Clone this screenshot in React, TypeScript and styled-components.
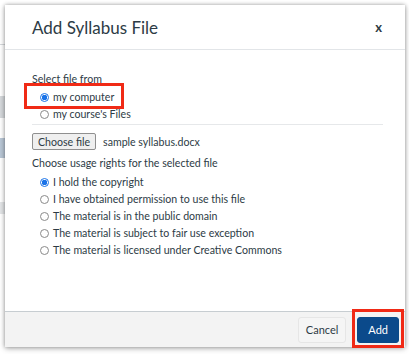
import React from 'react';
import styled, { createGlobalStyle } from 'styled-components';

const GlobalStyle = createGlobalStyle`
  html, body {
    margin: 0;
    padding: 0;
    background: #ffffff;
  }
  body {
    font-family: Lato, "Open Sans", "Liberation Sans", sans-serif;
    color: #2d3b45;
  }
`

const Page = styled.div`
  position: relative;
  width: 409px;
  height: 354px;
  padding: 5px 4px 7px 5px;
  box-sizing: border-box;
  overflow: hidden;
  background: #fff;
`

const Backdrop = styled.div`
  position: absolute;
  left: 0;
  width: 6px;
  background: ${p => p.color};
`

const Dialog = styled.div`
  position: relative;
  width: 400px;
  height: 342px;
  display: flex;
  flex-direction: column;
  background: #fff;
  box-shadow: 0 0 4px rgba(0, 0, 0, 0.35), 0 2px 6px rgba(0, 0, 0, 0.2);
`

const Header = styled.div`
  height: 44px;
  display: flex;
  align-items: center;
  justify-content: space-between;
  padding: 0 23px 0 27px;
  border-bottom: 1px solid #e2e5e8;
  flex-shrink: 0;
`

const Title = styled.h1`
  margin: 0;
  font-size: 17px;
  font-weight: 400;
  color: #2d3b45;
`

const Close = styled.span`
  font-size: 13px;
  font-weight: 700;
  color: #2d3b45;
  line-height: 1;
`

const Body = styled.div`
  flex: 1;
  padding: 22px 22px 0 27px;
  font-size: 10.6px;
`

const Label = styled.div`
  line-height: 14px;
  margin-bottom: ${p => p.$gap || 0}px;
`

const RadioList = styled.div`
  display: flex;
  flex-direction: column;
  padding-left: ${p => p.$indent || 0}px;
  gap: ${p => p.$gap || 0}px;
`

const RadioRow = styled.label`
  position: relative;
  display: flex;
  align-items: center;
  gap: 4px;
  height: 14px;
  line-height: 14px;
  width: max-content;
`

const Dot = styled.span`
  width: 9px;
  height: 9px;
  box-sizing: border-box;
  border-radius: 50%;
  border: 1px solid ${p => (p.$on ? '#1a73e8' : '#8a8a8a')};
  background: ${p => (p.$on ? 'radial-gradient(circle, #1a73e8 0 2.6px, #fff 3px)' : '#fff')};
  flex-shrink: 0;
`

const Highlight = styled.span`
  position: absolute;
  inset: ${p => p.$inset};
  border: 3px solid #f02a16;
  pointer-events: none;
`

const Divider = styled.hr`
  border: 0;
  border-top: 1px solid #e6e8ea;
  margin: 3px 0 8px;
`

const FileRow = styled.div`
  display: flex;
  align-items: center;
  gap: 7px;
  margin-bottom: 6px;
`

const FileButton = styled.button`
  font-family: inherit;
  font-size: 10.6px;
  color: #2d3b45;
  height: 17px;
  padding: 0 5px;
  background: #efefef;
  border: 1px solid #8f8f8f;
  border-radius: 2px;
`

const Footer = styled.div`
  height: 35px;
  flex-shrink: 0;
  display: flex;
  justify-content: flex-end;
  align-items: center;
  gap: 11px;
  padding-right: 6px;
  background: #f3f3f3;
  border-top: 1px solid #c7cdd1;
`

const Button = styled.button`
  position: relative;
  font-family: inherit;
  font-size: 11px;
  height: 26px;
  padding: 0 ${p => (p.$primary ? 10 : 7)}px;
  border-radius: 3px;
  border: 1px solid ${p => (p.$primary ? '#0a4a87' : '#e6e6e6')};
  background: ${p => (p.$primary ? '#0b4a8b' : '#f5f5f5')};
  color: ${p => (p.$primary ? '#fff' : '#2d3b45')};
`

const rights = [
  'I hold the copyright',
  'I have obtained permission to use this file',
  'The material is in the public domain',
  'The material is subject to fair use exception',
  'The material is licensed under Creative Commons',
]

export default function App() {
  return (
    <Page>
      <GlobalStyle />
      <Backdrop color="#d6d9dc" style={{ top: 44, height: 1 }} />
      <Backdrop color="#d6d9dc" style={{ top: 96, height: 22 }} />
      <Backdrop color="#b9c7d6" style={{ top: 138, height: 20 }} />
      <Backdrop color="#e3e5e7" style={{ top: 202, height: 12 }} />
      <Dialog>
        <Header>
          <Title>Add Syllabus File</Title>
          <Close>x</Close>
        </Header>
        <Body>
          <Label>Select file from</Label>
          <RadioList $indent={8} $gap={3} style={{ marginTop: 4 }}>
            <RadioRow>
              <Dot $on />
              my computer
              <Highlight $inset="-7px -10px -5px -16px" />
            </RadioRow>
            <RadioRow>
              <Dot />
              my course's Files
            </RadioRow>
          </RadioList>
          <Divider />
          <FileRow>
            <FileButton>Choose file</FileButton>
            <span>sample syllabus.docx</span>
          </FileRow>
          <Label $gap={5}>Choose usage rights for the selected file</Label>
          <RadioList $indent={8} $gap={3}>
            {rights.map((r, i) => (
              <RadioRow key={r}>
                <Dot $on={i === 0} />
                {r}
              </RadioRow>
            ))}
          </RadioList>
        </Body>
        <Footer>
          <Button>Cancel</Button>
          <Button $primary>
            Add
            <Highlight $inset="-9px -6px -6px -6px" />
          </Button>
        </Footer>
      </Dialog>
    </Page>
  )
}
